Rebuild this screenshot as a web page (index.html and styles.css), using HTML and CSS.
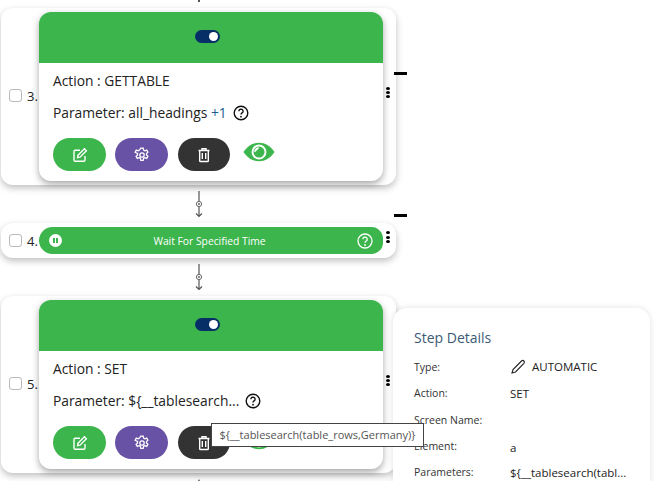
FILE: index.html
```html
<!DOCTYPE html>
<html>
<head>
<meta charset="utf-8">
<title>Steps</title>
<link rel="stylesheet" href="styles.css">
</head>
<body>
<div id="flow">
	<div class="tick"></div>

	<div class="step">
		<label class="pick"><span class="box"></span>3.</label>
		<div class="card">
			<div class="cardhead"><span class="toggle"><span class="knob"></span></span></div>
			<div class="cardbody">
				<div class="line">Action : GETTABLE</div>
				<div class="line second"><span>Parameter: all_headings <span class="more">+1</span></span>
					<svg class="help" viewBox="0 0 16 16"><circle cx="8" cy="8" r="6.800" fill="none" stroke="#111" stroke-width="1.400"/><path d="M5.900 6.200a2.100 2 0 1 1 3.200 1.700c-.7.500-1.100.8-1.100 1.700" fill="none" stroke="#111" stroke-width="1.400"/><circle cx="8" cy="11.700" r=".9" fill="#111"/></svg>
				</div>
				<div class="actions">
					<span class="btn green"><svg viewBox="0 0 16 16"><path d="M13 9v4a1.200 1.200 0 0 1-1.200 1.200H3.200A1.200 1.200 0 0 1 2 13V4.500a1.200 1.200 0 0 1 1.200-1.200H8" fill="none" stroke="#fff" stroke-width="1.400"/><path d="M6 8.200 12.400 1.800l2 2L8 10.200l-2.400.4z" fill="none" stroke="#fff" stroke-width="1.400"/></svg></span>
					<span class="btn purple"><svg viewBox="0 0 16 16"><circle cx="8" cy="8" r="2.200" fill="none" stroke="#fff" stroke-width="1.300"/><path d="M6.800 1.200h2.400l.4 1.900 1.300.7 1.800-.7 1.200 2.100-1.400 1.300v1.500l1.400 1.300-1.200 2.100-1.800-.7-1.300.7-.4 1.900H6.800l-.4-1.900-1.300-.7-1.800.7-1.200-2.100 1.400-1.300V6.500L1.100 5.200l1.200-2.100 1.800.7 1.300-.7z" fill="none" stroke="#fff" stroke-width="1.300"/></svg></span>
					<span class="btn dark"><svg viewBox="0 0 16 16"><path d="M2.500 3.500h11M6 3.300V1.800h4v1.500M3.700 3.500v10.200a.8.800 0 0 0 .8.800h7a.8.800 0 0 0 .8-.8V3.500M6.300 6v6M9.700 6v6" fill="none" stroke="#fff" stroke-width="1.400"/></svg></span>
					<svg class="eye" viewBox="0 0 32 20"><path d="M0.500 10C5 3.500 10 0.800 16 0.800S27 3.500 31.500 10C27 16.500 22 19.200 16 19.200S5 16.500 0.500 10z" fill="#3cb54c"/><circle cx="16" cy="10" r="7.500" fill="#fff"/><circle cx="16" cy="10" r="5.500" fill="#3cb54c"/><path d="M11.200 10a4.800 4.800 0 0 1 4.800-4.800 2.900 2.900 0 0 1-2 2.800 2.900 2.900 0 0 1-2.800 2z" fill="#fff"/></svg>
				</div>
			</div>
		</div>
		<span class="dots"><i></i><i></i><i></i></span>
		<span class="dash"></span>
	</div>

	<div class="link"><svg viewBox="0 0 10 27"><path d="M5 0v25M2 22.500 5 25.500 8 22.500" fill="none" stroke="#555" stroke-width="1.200"/><circle cx="5" cy="13" r="2.600" fill="#fff" stroke="#666"/><circle cx="5" cy="13" r="1" fill="#666"/></svg></div>

	<div class="step slim">
		<label class="pick"><span class="box"></span>4.</label>
		<div class="bar">
			<span class="pause"><i></i><i></i></span>
			<span class="bartitle">Wait For Specified Time</span>
			<svg class="barhelp" viewBox="0 0 16 16"><circle cx="8" cy="8" r="7" fill="none" stroke="#fff" stroke-width="1.300"/><path d="M5.800 6.200a2.200 2.100 0 1 1 3.400 1.800c-.8.500-1.200.8-1.200 1.700" fill="none" stroke="#fff" stroke-width="1.300"/><circle cx="8" cy="12" r=".9" fill="#fff"/></svg>
		</div>
		<span class="dots"><i></i><i></i><i></i></span>
		<span class="dash"></span>
	</div>

	<div class="link"><svg viewBox="0 0 10 27"><path d="M5 0v25M2 22.500 5 25.500 8 22.500" fill="none" stroke="#555" stroke-width="1.200"/><circle cx="5" cy="13" r="2.600" fill="#fff" stroke="#666"/><circle cx="5" cy="13" r="1" fill="#666"/></svg></div>

	<div class="step">
		<label class="pick"><span class="box"></span>5.</label>
		<div class="card">
			<div class="cardhead"><span class="toggle"><span class="knob"></span></span></div>
			<div class="cardbody">
				<div class="line">Action : SET</div>
				<div class="line second"><span>Parameter: ${__tablesearch...</span>
					<svg class="help" viewBox="0 0 16 16"><circle cx="8" cy="8" r="6.800" fill="none" stroke="#111" stroke-width="1.400"/><path d="M5.900 6.200a2.100 2 0 1 1 3.200 1.700c-.7.500-1.100.8-1.100 1.700" fill="none" stroke="#111" stroke-width="1.400"/><circle cx="8" cy="11.700" r=".9" fill="#111"/></svg>
				</div>
				<div class="actions">
					<span class="btn green"><svg viewBox="0 0 16 16"><path d="M13 9v4a1.200 1.200 0 0 1-1.200 1.200H3.200A1.200 1.200 0 0 1 2 13V4.500a1.200 1.200 0 0 1 1.200-1.200H8" fill="none" stroke="#fff" stroke-width="1.400"/><path d="M6 8.200 12.400 1.800l2 2L8 10.200l-2.400.4z" fill="none" stroke="#fff" stroke-width="1.400"/></svg></span>
					<span class="btn purple"><svg viewBox="0 0 16 16"><circle cx="8" cy="8" r="2.200" fill="none" stroke="#fff" stroke-width="1.300"/><path d="M6.800 1.200h2.400l.4 1.900 1.300.7 1.800-.7 1.200 2.100-1.400 1.300v1.500l1.400 1.300-1.200 2.100-1.800-.7-1.300.7-.4 1.900H6.800l-.4-1.900-1.300-.7-1.800.7-1.200-2.100 1.400-1.300V6.500L1.100 5.200l1.200-2.100 1.800.7 1.300-.7z" fill="none" stroke="#fff" stroke-width="1.300"/></svg></span>
					<span class="btn dark"><svg viewBox="0 0 16 16"><path d="M2.500 3.500h11M6 3.300V1.800h4v1.500M3.700 3.500v10.200a.8.800 0 0 0 .8.800h7a.8.800 0 0 0 .8-.8V3.500M6.300 6v6M9.700 6v6" fill="none" stroke="#fff" stroke-width="1.400"/></svg></span>
					<svg class="eye" viewBox="0 0 32 20"><path d="M0.500 10C5 3.500 10 0.800 16 0.800S27 3.500 31.500 10C27 16.500 22 19.200 16 19.200S5 16.500 0.500 10z" fill="#3cb54c"/><circle cx="16" cy="10" r="7.500" fill="#fff"/><circle cx="16" cy="10" r="5.500" fill="#3cb54c"/><path d="M11.200 10a4.800 4.800 0 0 1 4.800-4.800 2.900 2.900 0 0 1-2 2.800 2.900 2.900 0 0 1-2.800 2z" fill="#fff"/></svg>
				</div>
			</div>
		</div>
		<span class="dots"><i></i><i></i><i></i></span>
	</div>

	<div class="tick last"></div>
</div>

<div id="details">
	<div id="detailstitle">Step Details</div>
	<div id="detailsgrid">
		<div>Type:</div><div class="typeval"><svg viewBox="0 0 16 16"><path d="M2 14 3 10.500 11.500 2c.8-.7 1.700-.7 2.400 0s.7 1.600 0 2.400L5.500 13z" fill="none" stroke="#222" stroke-width="1.100"/></svg>AUTOMATIC</div>
		<div>Action:</div><div>SET</div>
		<div>Screen Name:</div><div></div>
		<div>Element:</div><div class="elementval">a</div>
		<div>Parameters:</div><div>${__tablesearch(tabl...</div>
	</div>
</div>

<div id="tooltip">${__tablesearch(table_rows,Germany)}</div>
</body>
</html>
```

FILE: styles.css
```css
html, body {
	margin: 0;
	height: 481px;
	overflow: hidden;
	background: white;
	color: #222;
	font-family: "Open Sans", sans-serif;
}
#flow {
	width: 395px;
	margin-left: 1px;
}
.tick {
	width: 2px;
	height: 8px;
	margin-left: 197px;
	background: linear-gradient(#555 2px, transparent 2px);
}
.tick.last {
	height: 6px;
	margin-top: 6px;
	background: linear-gradient(transparent 0, #555 2px);
}
.step {
	position: relative;
	display: flex;
	align-items: center;
	padding: 4px 13px 4px 0;
	background: white;
	border-radius: 12px;
	box-shadow: 0 3px 7px rgba(0, 0, 0, 0.25);
}
.pick {
	display: flex;
	align-items: center;
	width: 38px;
	flex: none;
	padding-bottom: 2px;
	font-size: 13px;
	color: #222;
	white-space: nowrap;
}
.slim .pick {
	padding-bottom: 0;
}
.box {
	width: 11px;
	height: 11px;
	margin: 0 5px 0 8px;
	flex: none;
	border: 1px solid #bbb;
	border-radius: 3px;
	background: white;
}
.card {
	width: 344px;
	height: 169px;
	flex: none;
	border-radius: 12px;
	background: white;
	box-shadow: 0 3px 7px rgba(0, 0, 0, 0.35);
}
.cardhead {
	display: flex;
	align-items: center;
	justify-content: center;
	height: 49px;
	padding: 0 7px 2px 0;
	background: #3bb54c;
	border-radius: 12px 12px 0 0;
}
.toggle {
	display: flex;
	align-items: center;
	justify-content: flex-end;
	width: 25px;
	height: 13px;
	padding-right: 2px;
	box-sizing: border-box;
	border-radius: 7px;
	background: #052f66;
}
.knob {
	width: 9px;
	height: 9px;
	border-radius: 50%;
	background: white;
}
.cardbody {
	padding: 8px 14px 0;
}
.line {
	font-size: 13.800px;
	line-height: 20px;
	color: #222;
}
.line.second {
	display: flex;
	align-items: center;
	gap: 4px;
	margin-top: 12px;
	white-space: nowrap;
}
.more {
	color: #1c5a8c;
}
.help {
	width: 16px;
	height: 16px;
	margin-left: 2px;
}
.actions {
	display: flex;
	align-items: center;
	gap: 9px;
	margin-top: 15px;
}
.btn {
	display: flex;
	align-items: center;
	justify-content: center;
	width: 53px;
	height: 33px;
	border-radius: 17px;
}
.btn svg {
	width: 16px;
	height: 16px;
}
.green {
	background: #3cb54c;
}
.purple {
	background: #6852a5;
}
.dark {
	width: 52px;
	margin-left: 1px;
	background: #333;
}
.eye {
	width: 32px;
	height: 20px;
	margin: -5px 0 0 4px;
}
.dots {
	position: absolute;
	left: 385px;
	top: 79px;
	display: flex;
	flex-direction: column;
	gap: 1px;
}
.dots i {
	width: 4px;
	height: 3px;
	border-radius: 50%;
	background: black;
}
.dash {
	position: absolute;
	left: 393px;
	top: 64px;
	width: 13px;
	height: 3px;
	background: black;
}
.link {
	height: 38px;
	padding: 6px 0 0 193px;
	box-sizing: border-box;
}
.link svg {
	display: block;
	width: 10px;
	height: 27px;
}
.bar {
	display: flex;
	align-items: center;
	width: 344px;
	height: 27px;
	flex: none;
	box-sizing: border-box;
	padding: 0 10px;
	border-radius: 14px 12px 12px 14px;
	background: #3bb54c;
	color: white;
}
.pause {
	display: flex;
	align-items: center;
	justify-content: center;
	gap: 1px;
	width: 13px;
	height: 13px;
	flex: none;
	border-radius: 50%;
	background: white;
}
.pause i {
	width: 2px;
	height: 5px;
	background: #3bb54c;
}
.bartitle {
	flex: 1;
	text-align: center;
	font-size: 10.300px;
	font-weight: 500;
}
.barhelp {
	width: 16px;
	height: 16px;
	flex: none;
}
.slim .dots {
	top: 8px;
	gap: 1.500px;
}
.slim .dash {
	top: -9px;
}
#details {
	position: absolute;
	left: 393px;
	top: 308px;
	width: 257px;
	height: 190px;
	box-sizing: border-box;
	padding: 20px 0 0 21px;
	background: white;
	border-radius: 14px;
	box-shadow: 0 0 6px rgba(0, 0, 0, 0.12);
}
#detailstitle {
	font-size: 14px;
	line-height: 19px;
	color: #3b5a76;
}
#detailsgrid {
	display: grid;
	grid-template-columns: 96px 1fr;
	grid-auto-rows: 26.300px;
	align-items: center;
	margin-top: 7px;
	font-size: 10.500px;
	color: #333;
}
#detailsgrid div:nth-child(even) {
	font-size: 11.500px;
	color: #222;
}
.typeval {
	display: flex;
	align-items: center;
	gap: 6px;
	padding-bottom: 1px;
}
.typeval svg {
	width: 16px;
	height: 16px;
}
.elementval {
	padding-top: 3px;
}
#tooltip {
	position: absolute;
	left: 211px;
	top: 423px;
	width: 213px;
	height: 24px;
	box-sizing: border-box;
	border: 1px solid #444;
	background: white;
	color: #555;
	font-size: 11px;
	line-height: 22px;
	text-align: center;
	white-space: nowrap;
}
```
